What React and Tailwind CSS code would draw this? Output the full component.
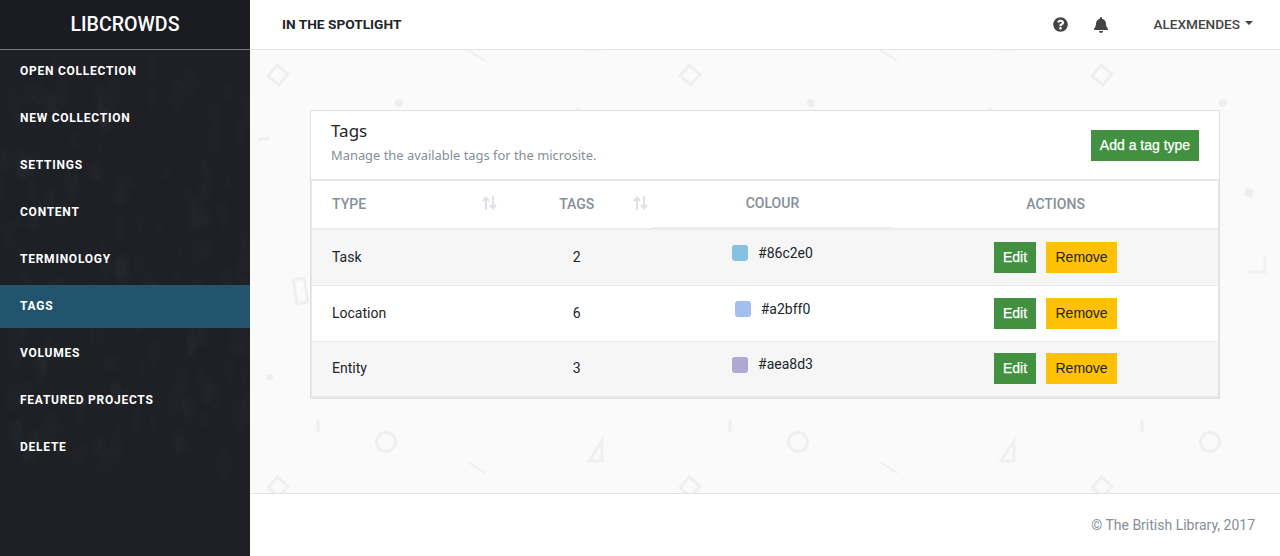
import React from "react";
import { FaQuestionCircle, FaBell } from "react-icons/fa";

const navItems = [
  "Open collection",
  "New collection",
  "Settings",
  "Content",
  "Terminology",
  "Tags",
  "Volumes",
  "Featured projects",
  "Delete",
];

const tagTypes = [
  { name: "Task", count: 2, colour: "#86c2e0" },
  { name: "Location", count: 6, colour: "#a2bff0" },
  { name: "Entity", count: 3, colour: "#aea8d3" },
];

// the faint crowd photo behind the sidebar, approximated with small blobs
function crowdBlobs() {
  let seed = 17;
  const rand = () => {
    seed = (seed * 16807) % 2147483647;
    return seed / 2147483647;
  };
  const blobs = [];
  for (let i = 0; i < 170; i++) {
    const x = rand() * 250;
    const y = 60 + rand() * 400;
    const size = 3 + rand() * 5;
    blobs.push({ x, y, size, wide: rand() * 6 });
  }
  return blobs;
}

function SidebarTexture() {
  return (
    <svg className="absolute inset-0 h-full w-full" aria-hidden="true">
      <g fill="#ffffff" fillOpacity="0.012">
        {crowdBlobs().map((b, i) => (
          <g key={i}>
            <ellipse cx={b.x} cy={b.y} rx={b.size} ry={b.size * 1.3} />
            <path
              d={`M${b.x - b.size - b.wide} ${b.y + b.size} L${b.x + b.size + b.wide} ${b.y + b.size} L${b.x} ${b.y + b.size * 3.2} Z`}
            />
          </g>
        ))}
      </g>
    </svg>
  );
}

function PatternBackground() {
  return (
    <svg className="absolute inset-0 h-full w-full" aria-hidden="true">
      <defs>
        <pattern id="shapes" width="412" height="412" patternUnits="userSpaceOnUse">
          <g fill="none" stroke="#efefef" strokeWidth="3">
            <rect x="21" y="18" width="14" height="14" transform="rotate(40 28 25)" />
            <line x1="218" y1="0" x2="235" y2="11" strokeWidth="2" />
            <line x1="8" y1="90" x2="19" y2="88" />
            <rect x="45" y="229" width="11" height="24" transform="rotate(-8 50 241)" />
            <line x1="68" y1="370" x2="68" y2="382" />
            <line x1="328" y1="58" x2="328" y2="70" />
            <circle cx="136" cy="392" r="9.5" />
            <path d="M352 391 V411 H339 Z" />
            <path d="M352 -21 V-1 H339 Z" />
            <path d="M191 205 V222 H174" stroke="#f2f2f2" />
          </g>
          <g fill="#eeeeee">
            <circle cx="149" cy="53" r="4" />
            <circle cx="20" cy="327" r="3" />
            <rect x="171" y="139" width="8" height="8" transform="rotate(15 175 143)" />
          </g>
        </pattern>
      </defs>
      <rect width="100%" height="100%" fill="url(#shapes)" />
    </svg>
  );
}

function SortIcon({ className }) {
  return (
    <svg
      className={className}
      width="15"
      height="14"
      viewBox="0 0 15 14"
      fill="none"
      stroke="#dee2e6"
      strokeWidth="2"
    >
      <path d="M4 14 V2 M1 5 L4 1.5 L7 5" />
      <path d="M11 0 V12 M8 9 L11 12.5 L14 9" />
    </svg>
  );
}

function App() {
  return (
    <div className="flex h-screen w-full overflow-hidden font-['Roboto',sans-serif] text-[#212529]">
      <aside className="relative w-[250px] shrink-0 bg-[#1e2026]">
        <SidebarTexture />
        <div className="relative flex h-[50px] items-center justify-center border-b border-[#77787b] bg-[#1a1c21] text-[19.6px] font-medium text-white">
          LIBCROWDS
        </div>
        <ul className="relative">
          {navItems.map((item) => (
            <li
              key={item}
              className={
                item === "Tags"
                  ? "mb-1 flex h-[43px] items-center bg-[#225a75]/90 pb-[2px] pl-5 text-[12px] font-bold uppercase tracking-[0.75px] text-white"
                  : "mb-1 flex h-[43px] items-center pb-[2px] pl-5 text-[12px] font-bold uppercase tracking-[0.75px] text-white"
              }
            >
              {item}
            </li>
          ))}
        </ul>
      </aside>

      <div className="flex min-w-0 flex-1 flex-col">
        <header className="flex h-[50px] shrink-0 items-center border-b border-[#e3e3e3] bg-white pl-8 pr-[27px]">
          <span className="text-[13.7px] font-bold uppercase text-[#212529]">In the spotlight</span>
          <FaQuestionCircle className="ml-auto text-[15px] text-[#444444]" />
          <FaBell className="ml-[25px] text-[16px] text-[#444444]" />
          <span className="ml-[44px] text-[13.6px] font-medium text-[#444444]">ALEXMENDES</span>
          <span className="mb-[3px] ml-[5px] border-x-[4px] border-t-[4px] border-x-transparent border-t-[#444444]" />
        </header>

        <main className="relative flex-1 overflow-hidden bg-[#fafafa] px-[60px] pt-[60px]">
          <PatternBackground />
          <section className="relative w-[910px] border border-[#e0e0e0] bg-white">
            <div className="flex h-[68px] items-start justify-between px-5 pt-[9px]">
              <div>
                <h1 className="font-['Noto_Sans',sans-serif] text-[17px] leading-[22px]">Tags</h1>
                <p className="mt-[3px] font-['Noto_Sans',sans-serif] text-[12.9px] leading-[20px] text-[#868e96]">
                  Manage the available tags for the microsite.
                </p>
              </div>
              <button className="mt-[10px] h-[31px] w-[108px] bg-[#419141] font-['Liberation_Sans',sans-serif] text-[14px] text-white [-webkit-text-stroke:0.25px_white]">
                Add a tag type
              </button>
            </div>
            <div className="border-t-2 border-[#e6e6e6]">
              <table className="w-full table-fixed border-x border-b-2 border-[#e5e7e9] text-[14px]">
                <colgroup>
                  <col className="w-[188px]" />
                  <col className="w-[152px]" />
                  <col className="w-[241px]" />
                  <col className="w-[325px]" />
                </colgroup>
                <thead>
                  <tr className="h-[48px] border-b-2 border-[#e9ecef] text-[14px] uppercase text-[#868e96]">
                    <th className="relative pl-5 text-left font-medium">
                      Type
                      <SortIcon className="absolute right-[3px] top-[15px]" />
                    </th>
                    <th className="relative pl-[2px] text-center font-medium">
                      Tags
                      <SortIcon className="absolute right-[4px] top-[15px]" />
                    </th>
                    <th className="relative pb-[2px] text-center font-medium">
                      Colour
                      <span className="absolute inset-x-0 bottom-0 h-px bg-[#e9ecef]" />
                    </th>
                    <th className="text-center font-medium">Actions</th>
                  </tr>
                </thead>
                <tbody>
                  {tagTypes.map((tag, i) => (
                    <tr
                      key={tag.name}
                      className={
                        i % 2 === 0
                          ? "h-[56px] border-b border-[#ebebeb] bg-[#f6f6f6] last:border-b-0"
                          : "h-[56px] border-b border-[#ebebeb] bg-white"
                      }
                    >
                      <td className="pl-5">{tag.name}</td>
                      <td className="pl-[2px] text-center">{tag.count}</td>
                      <td className="pb-2">
                        <div className="flex items-center justify-center gap-[10px]">
                          <span
                            className="h-4 w-4 rounded-[3px]"
                            style={{ backgroundColor: tag.colour }}
                          />
                          <span>{tag.colour}</span>
                        </div>
                      </td>
                      <td>
                        <div className="flex justify-center gap-[10px] font-['Liberation_Sans',sans-serif]">
                          <button className="h-[31px] w-[42px] bg-[#419141] text-white [-webkit-text-stroke:0.25px_white]">
                            Edit
                          </button>
                          <button className="h-[31px] w-[71px] bg-[#ffc107] text-[#212529]">Remove</button>
                        </div>
                      </td>
                    </tr>
                  ))}
                </tbody>
              </table>
            </div>
          </section>
        </main>

        <footer className="flex h-[63px] shrink-0 items-center justify-end border-t border-[#e3e3e3] bg-white pr-[25px] text-[14px] text-[#868e96]">
          © The British Library, 2017
        </footer>
      </div>
    </div>
  );
}

export default App;
